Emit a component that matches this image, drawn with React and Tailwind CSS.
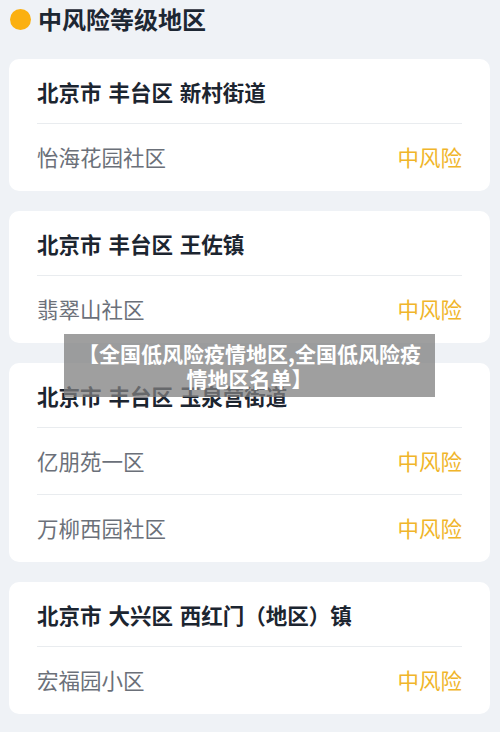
const groups = [
  { title: "北京市 丰台区 新村街道", items: ["怡海花园社区"] },
  { title: "北京市 丰台区 王佐镇", items: ["翡翠山社区"] },
  { title: "北京市 丰台区 玉泉营街道", items: ["亿朋苑一区", "万柳西园社区"] },
  { title: "北京市 大兴区 西红门（地区）镇", items: ["宏福园小区"] },
];

export default function App() {
  return (
    <div
      className="relative min-h-[732px] bg-[#eff2f6] px-[9px] pr-[10px] pt-[8px] pb-4"
      style={{ fontFamily: '"Noto Sans CJK SC", "Noto Sans", sans-serif' }}
    >
      {/* 标题 */}
      <div className="flex items-center gap-[7px] h-[22px] pl-[1px]">
        <span className="w-[21px] h-[21px] rounded-full bg-[#fbb010]" />
        <h1 className="text-[24px] font-bold text-[#1d2733] leading-none">中风险等级地区</h1>
      </div>

      <div className="mt-[29px] flex flex-col gap-[20px]">
        {groups.map((g) => (
          <div key={g.title} className="bg-white rounded-[10px] px-[28px]">
            <div className="h-[65px] flex items-center border-b border-[#e9ecef] pt-[2px]">
              <span className="text-[21.5px] font-bold text-[#1c2530] [word-spacing:2px]">{g.title}</span>
            </div>
            {g.items.map((it, i) => (
              <div
                key={it}
                className={`h-[67px] flex items-center justify-between ${
                  i < g.items.length - 1 ? "border-b border-[#e9ecef]" : ""
                }`}
              >
                <span className="text-[21.5px] text-[#6b7079]">{it}</span>
                <span className="text-[21.5px] text-[#f0b52a]">中风险</span>
              </div>
            ))}
          </div>
        ))}
      </div>

      {/* 水印标题 */}
      <div className="absolute left-[64px] top-[334px] w-[371px] h-[63px] bg-[#7f7f7f]/75 flex items-center justify-center px-[14px]">
        <p className="text-[21px] leading-[25px] font-bold text-white text-center">
          【全国低风险疫情地区,全国低风险疫情地区名单】
        </p>
      </div>
    </div>
  );
}
